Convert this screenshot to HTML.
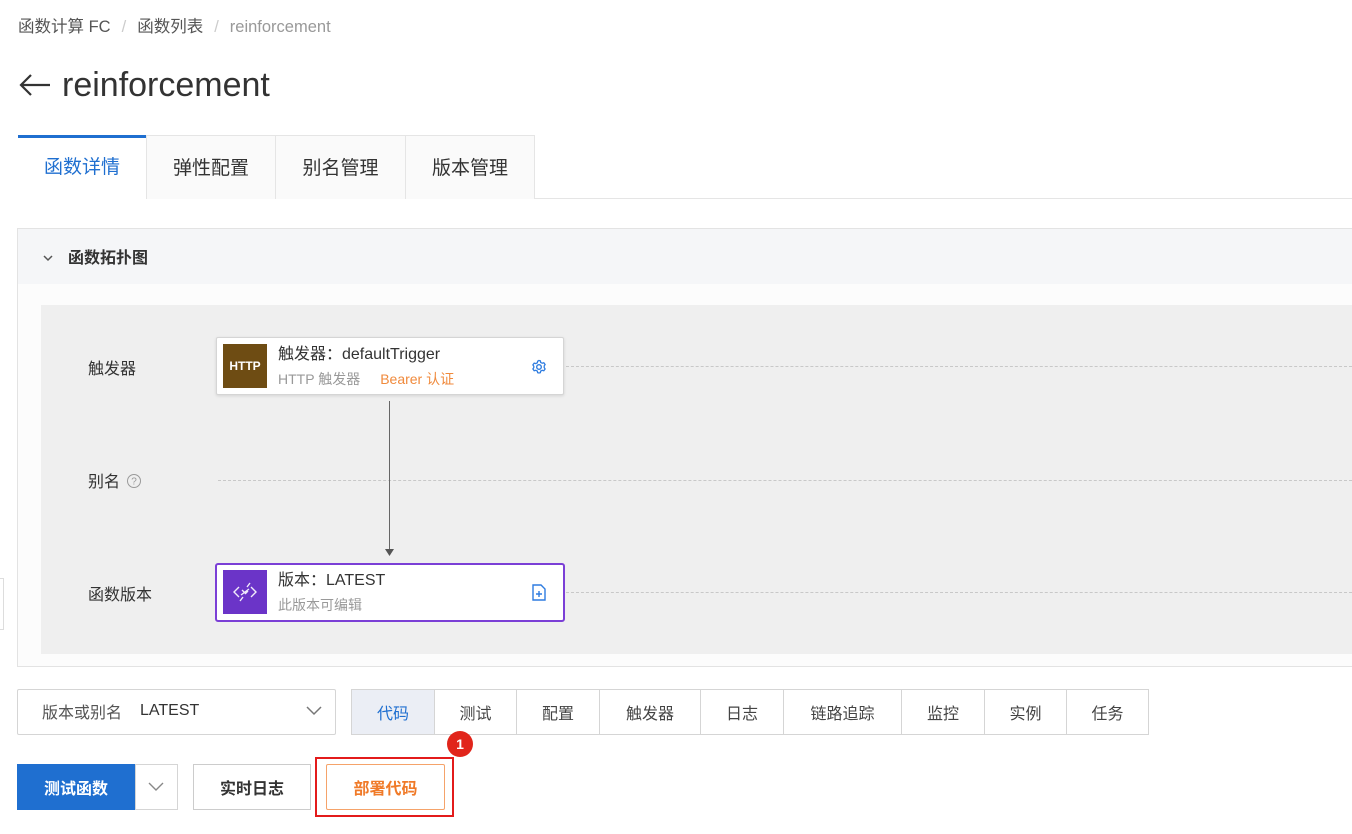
<!DOCTYPE html>
<html><head><meta charset="utf-8">
<style>
*{margin:0;padding:0;box-sizing:border-box}
body{width:1352px;height:834px;overflow:hidden;background:#fff;font-family:"Liberation Sans","Noto Sans CJK SC",sans-serif;color:#333;position:relative}
.a{position:absolute}
.bc{top:13px;left:18px;font-size:16.5px;color:#555;white-space:nowrap}
.bc span.s{color:#ccc;margin:0 11px}
.bc span.g{color:#999}
.title{top:66px;left:18px;font-size:34px;color:#333;white-space:nowrap}
.tab{top:135px;height:64px;border:1px solid #e5e5e5;border-bottom:none;background:#fafafa;font-size:19px;color:#333;display:flex;align-items:center;justify-content:center;padding-bottom:3px}
.tab.on{background:#fff;color:#1f6fd0;border-top:3px solid #1f6fd0;border-left:none;padding-bottom:6px}
.node{background:#fff;border:1px solid #d5d5d5;box-shadow:0 1px 3px rgba(0,0,0,.12);border-radius:2px}
.lbl{font-size:16px;color:#333}
.dash{height:0;border-top:1px dashed #c8c8c8}
.bt{top:689px;height:46px;border:1px solid #d5d5d5;border-left:none;font-size:16px;color:#444;display:flex;align-items:center;justify-content:center;background:#fff}
</style></head><body>
<div class="a bc">函数计算 FC<span class="s">/</span>函数列表<span class="s">/</span><span class="g">reinforcement</span></div>
<div class="a title"><svg width="34" height="24" viewBox="0 0 34 24" style="vertical-align:-1px;margin-right:10px"><path d="M32 12H3M13 2L3 12l10 10" fill="none" stroke="#333" stroke-width="2.2"/></svg>reinforcement</div>

<div class="a" style="top:198px;left:146px;width:1206px;border-top:1px solid #e5e5e5"></div>
<div class="a tab on" style="left:18px;width:129px">函数详情</div>
<div class="a tab" style="left:146px;width:130px">弹性配置</div>
<div class="a tab" style="left:275px;width:131px">别名管理</div>
<div class="a tab" style="left:405px;width:130px">版本管理</div>

<div class="a" style="top:228px;left:17px;width:1340px;height:439px;border:1px solid #e3e3e3;background:#fcfcfc"></div>
<div class="a" style="top:229px;left:18px;width:1334px;height:55px;background:#f5f6f8"></div>
<div class="a" style="top:244px;left:42px;font-size:16px;color:#333;font-weight:bold"><svg width="12" height="10" viewBox="0 0 12 10" style="margin-right:14px"><path d="M2 3l4 4 4-4" fill="none" stroke="#555" stroke-width="1.5"/></svg>函数拓扑图</div>
<div class="a" style="top:305px;left:41px;width:1311px;height:349px;background:#efefef"></div>

<div class="a lbl" style="top:355px;left:88px">触发器</div>
<div class="a lbl" style="top:468px;left:88px">别名 <svg width="16" height="16" viewBox="0 0 16 16" style="vertical-align:-2px;margin-left:2px"><circle cx="8" cy="8" r="6.5" fill="none" stroke="#999"/><text x="8" y="11.5" font-size="10" text-anchor="middle" fill="#999" font-family="Liberation Sans">?</text></svg></div>
<div class="a lbl" style="top:581px;left:88px">函数版本</div>

<div class="a dash" style="top:366px;left:566px;width:786px"></div>
<div class="a dash" style="top:480px;left:218px;width:1134px"></div>
<div class="a dash" style="top:592px;left:566px;width:786px"></div>

<div class="a" style="top:401px;left:389px;width:1px;height:150px;background:#666"></div>
<svg class="a" style="top:549px;left:385px" width="10" height="8"><path d="M0 0h9L4.5 7z" fill="#555"/></svg>

<div class="a node" style="top:337px;left:216px;width:348px;height:58px"></div>
<div class="a" style="top:344px;left:223px;width:44px;height:44px;background:#6e4c13;color:#fff;font-weight:bold;font-size:12px;display:flex;align-items:center;justify-content:center">HTTP</div>
<div class="a" style="top:340px;left:278px;font-size:16px;color:#333;white-space:nowrap">触发器：defaultTrigger</div>
<div class="a" style="top:369px;left:278px;font-size:14px;color:#999;white-space:nowrap">HTTP 触发器<span style="color:#f08a3c;margin-left:20px">Bearer 认证</span></div>
<svg class="a" style="top:359px;left:531px" width="16" height="16" viewBox="0 0 16 16"><circle cx="8" cy="8" r="2.3" fill="none" stroke="#2e7ce0" stroke-width="1.4"/><path d="M8 1.5l1.3.3.4 1.6 1.5.8 1.6-.5 1.3 1.8-.9 1.4v1.7l.9 1.4-1.3 1.8-1.6-.5-1.5.8-.4 1.6-1.3.3-1.3-.3-.4-1.6-1.5-.8-1.6.5-1.3-1.8.9-1.4V7.3l-.9-1.4 1.3-1.8 1.6.5 1.5-.8.4-1.6z" fill="none" stroke="#2e7ce0" stroke-width="1.3"/></svg>

<div class="a" style="top:563px;left:215px;width:350px;height:59px;background:#fff;border:2px solid #7b3fd6;border-radius:3px"></div>
<div class="a" style="top:570px;left:223px;width:44px;height:44px;background:#6b34c8"></div>
<svg class="a" style="top:570px;left:223px" width="44" height="44" viewBox="0 0 44 44"><path d="M16 17l-5 5 5 5M28 17l5 5-5 5M18 25l8-6M19 20l3 3M25 21l-3 3M27 13l-3 4M17 31l3-4" fill="none" stroke="#fff" stroke-width="1.4" opacity=".9"/></svg>
<div class="a" style="top:566px;left:278px;font-size:16px;color:#333;white-space:nowrap">版本：LATEST</div>
<div class="a" style="top:595px;left:278px;font-size:14px;color:#999">此版本可编辑</div>
<svg class="a" style="top:584px;left:532px" width="14" height="17" viewBox="0 0 14 17"><path d="M1 1h8l4 4v11H1z" fill="none" stroke="#2e7ce0" stroke-width="1.4"/><path d="M7 7v6M4 10h6" stroke="#2e7ce0" stroke-width="1.4"/></svg>

<div class="a" style="top:578px;left:0;width:4px;height:52px;border:1px solid #ddd;border-left:none;background:#fff"></div>

<div class="a" style="top:689px;left:17px;width:319px;height:46px;border:1px solid #d5d5d5;border-radius:2px;font-size:16px;color:#555;padding:0 0 2px 24px;white-space:nowrap;display:flex;align-items:center">版本或别名<span style="margin-left:18px;color:#333">LATEST</span></div>
<svg class="a" style="top:705px;left:306px" width="16" height="12"><path d="M1 2l7 7 7-7" fill="none" stroke="#777" stroke-width="1.5"/></svg>

<div class="a bt" style="left:351px;width:84px;border-left:1px solid #d5d5d5;background:#ebeef5;color:#1f6fd0">代码</div>
<div class="a bt" style="left:435px;width:82px">测试</div>
<div class="a bt" style="left:517px;width:83px">配置</div>
<div class="a bt" style="left:600px;width:101px">触发器</div>
<div class="a bt" style="left:701px;width:83px">日志</div>
<div class="a bt" style="left:784px;width:118px">链路追踪</div>
<div class="a bt" style="left:902px;width:83px">监控</div>
<div class="a bt" style="left:985px;width:82px">实例</div>
<div class="a bt" style="left:1067px;width:82px">任务</div>

<div class="a" style="top:731px;left:447px;width:26px;height:26px;border-radius:50%;background:#e1251b;color:#fff;font-size:14px;font-weight:bold;display:flex;align-items:center;justify-content:center">1</div>

<div class="a" style="top:764px;left:17px;width:118px;height:46px;background:#1f6fd0;color:#fff;font-size:16px;font-weight:bold;display:flex;align-items:center;justify-content:center">测试函数</div>
<div class="a" style="top:764px;left:135px;width:43px;height:46px;border:1px solid #d5d5d5"></div>
<svg class="a" style="top:781px;left:147px" width="18" height="12"><path d="M2 2l7 7 7-7" fill="none" stroke="#888" stroke-width="1.4"/></svg>
<div class="a" style="top:764px;left:193px;width:118px;height:46px;border:1px solid #ccc;font-size:16px;font-weight:bold;color:#333;display:flex;align-items:center;justify-content:center">实时日志</div>
<div class="a" style="top:757px;left:315px;width:139px;height:60px;border:2px solid #e31b1b"></div>
<div class="a" style="top:764px;left:326px;width:119px;height:46px;border:1px solid #f5a36a;border-radius:2px;font-size:16px;font-weight:bold;color:#f07a28;display:flex;align-items:center;justify-content:center">部署代码</div>
</body></html>
